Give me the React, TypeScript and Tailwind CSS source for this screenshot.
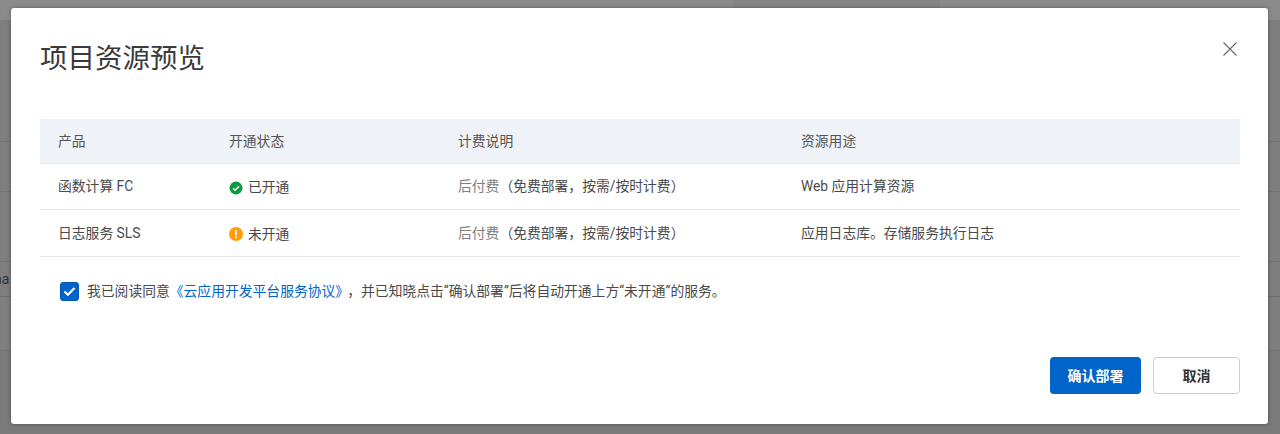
const rows = [
  { name: "函数计算 FC", ok: true, status: "已开通", use: "Web 应用计算资源", height: "h-[46px]" },
  { name: "日志服务 SLS", ok: false, status: "未开通", use: "应用日志库。存储服务执行日志", height: "h-[47px]" },
]

const CheckDot = () => (
  <svg width="14" height="14" viewBox="0 0 14 14" className="mt-0.5 shrink-0">
    <circle cx="7" cy="7" r="6.5" fill="#0d9a3c" />
    <path d="M4 7.2l2.1 2 3.9-4" fill="none" stroke="#fff" strokeWidth="1.4" />
  </svg>
)

const WarnDot = () => (
  <svg width="14" height="14" viewBox="0 0 14 14" className="mt-0.5 shrink-0">
    <circle cx="7" cy="7" r="7" fill="#ff9c07" />
    <rect x="6.1" y="3" width="1.8" height="5.2" rx="0.8" fill="#fff" />
    <circle cx="7" cy="10.2" r="1" fill="#fff" />
  </svg>
)

const App = () => {
  return (
    <div className="relative h-[434px] w-[1280px] overflow-hidden bg-[#7e7e7e] font-['Roboto','Noto_Sans_CJK_SC',sans-serif]">
      {/* page behind the mask */}
      <div className="h-5 bg-[#8b8b8b] pl-[733px]">
        <div className="h-full w-[207px] bg-[#858585]" />
      </div>
      <div className="h-[122px] border-b border-[#747474]" />
      <div className="h-[50px] border-b border-[#747474]" />
      <div className="h-[70px] border-b border-[#747474]" />
      <div className="flex h-[35px] items-center border-b border-[#6e6e6e] text-sm text-[#333]">
        <span className="-ml-[6px]">na</span>
      </div>
      <div className="h-[54px] border-b border-[#747474]" />
      <div className="h-[84px] bg-[#7a7a7a]" />

      {/* dialog */}
      <div className="absolute top-2 left-[11px] flex h-[416px] w-[1257px] flex-col rounded-[3px] bg-white pr-[28px] pl-[29px] text-[#4a4a4a] shadow-[0_0_4px_rgba(0,0,0,0.35)]">
        <div className="flex h-[111px] items-start justify-between">
          <h1 className="mt-[31px] text-[27.5px] leading-10 font-normal text-[#3a3a3a]">项目资源预览</h1>
          <button className="mt-[33px] mr-[2px] text-[#666]">
            <svg width="16" height="16" viewBox="0 0 16 16" className="block">
              <path d="M1.5 1.5l13 13M14.5 1.5l-13 13" stroke="currentColor" strokeWidth="1.1" fill="none" />
            </svg>
          </button>
        </div>

        <div className="text-[13.8px]">
          <div className="grid h-[45px] grid-cols-[171px_229px_343px_1fr] items-center border-b border-[#e3e6ea] bg-[#eff2f7] px-[18px] text-[#555]">
            <div>产品</div>
            <div>开通状态</div>
            <div>计费说明</div>
            <div>资源用途</div>
          </div>
          {rows.map((row) => (
            <div
              key={row.name}
              className={`grid ${row.height} grid-cols-[171px_229px_343px_1fr] items-center border-b border-[#e5e5e5] px-[18px]`}
            >
              <div>{row.name}</div>
              <div className="flex items-center gap-[5px]">
                {row.ok ? <CheckDot /> : <WarnDot />}
                <span className="mt-0.5">{row.status}</span>
              </div>
              <div>
                <span className="text-[#808080]">后付费</span>（免费部署，按需/按时计费）
              </div>
              <div>{row.use}</div>
            </div>
          ))}
        </div>

        <label className="mt-[25px] flex h-[19px] items-center gap-2 pl-[20px] text-[13.8px]">
          <span className="flex h-[19px] w-[19px] items-center justify-center rounded-[3px] border border-[#0058b0] bg-[#0064c8]">
            <svg width="13" height="11" viewBox="0 0 13 11">
              <path d="M1.5 5.5l3.4 3.2L11.5 2" fill="none" stroke="#fff" strokeWidth="2.2" />
            </svg>
          </span>
          <span>
            我已阅读同意<a className="text-[#0064c8]">《云应用开发平台服务协议》</a>
            <span className="ml-[5px]">，并已知晓点击“确认部署”后将自动开通上方“未开通”的服务。</span>
          </span>
        </label>

        <div className="mt-[56px] flex justify-end gap-3">
          <button className="h-[37px] w-[91px] rounded-sm bg-[#0064c8] text-sm font-bold text-white">确认部署</button>
          <button className="h-[37px] w-[87px] rounded-sm border border-[#c8ccd2] bg-white text-sm font-bold text-[#333]">取消</button>
        </div>
      </div>
    </div>
  )
}

export default App
